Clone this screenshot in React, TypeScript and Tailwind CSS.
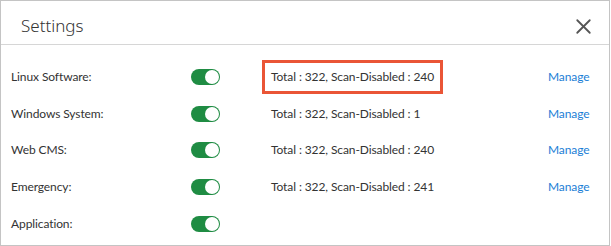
import { X } from 'lucide-react'

interface Row {
  label: string
  status?: string
  highlight?: boolean
}

const rows: Row[] = [
  { label: 'Linux Software:', status: 'Total : 322, Scan-Disabled : 240', highlight: true },
  { label: 'Windows System:', status: 'Total : 322, Scan-Disabled : 1' },
  { label: 'Web CMS:', status: 'Total : 322, Scan-Disabled : 240' },
  { label: 'Emergency:', status: 'Total : 322, Scan-Disabled : 241' },
  { label: 'Application:' },
]

function Toggle() {
  return (
    <div className="flex h-[16px] w-[29px] items-center justify-end rounded-full bg-[#1f8c43] p-[1px]">
      <div className="h-[14px] w-[14px] rounded-full bg-white" />
    </div>
  )
}

export default function App() {
  return (
    <div
      className="h-[246px] w-[611px] bg-white text-[#333]"
      style={{ fontFamily: 'Lato, "Noto Sans", sans-serif' }}
    >
      <div className="flex h-[246px] w-[610px] flex-col border border-[#c4c4c4]">
        <div className="flex h-[44px] items-center justify-between border-b border-[#d6d6d6] pl-[20px] pr-[13px] pt-[7px]">
          <span className="text-[17px] text-[#333]" style={{ fontFamily: '"Noto Sans", sans-serif', fontWeight: 300 }}>
            Settings
          </span>
          <X className="h-[25px] w-[25px] text-[#555]" strokeWidth={1.75} />
        </div>
        <div className="flex flex-col pt-[14px]">
          {rows.map((row) => (
            <div key={row.label} className="flex h-[36.6px] items-center text-[12px] tracking-[-0.1px]">
              <span className="w-[190px] pl-[10px]">{row.label}</span>
              <Toggle />
              <div className="ml-[51px] flex w-[277px] items-center">
                {row.status && (
                  <span
                    className={
                      row.highlight
                        ? '-ml-[9px] border-[3px] border-[#ea5536] px-[6px] py-[5px]'
                        : ''
                    }
                  >
                    {row.status}
                  </span>
                )}
              </div>
              {row.status && <span className="text-[#1a7ed6]">Manage</span>}
            </div>
          ))}
        </div>
      </div>
    </div>
  )
}
